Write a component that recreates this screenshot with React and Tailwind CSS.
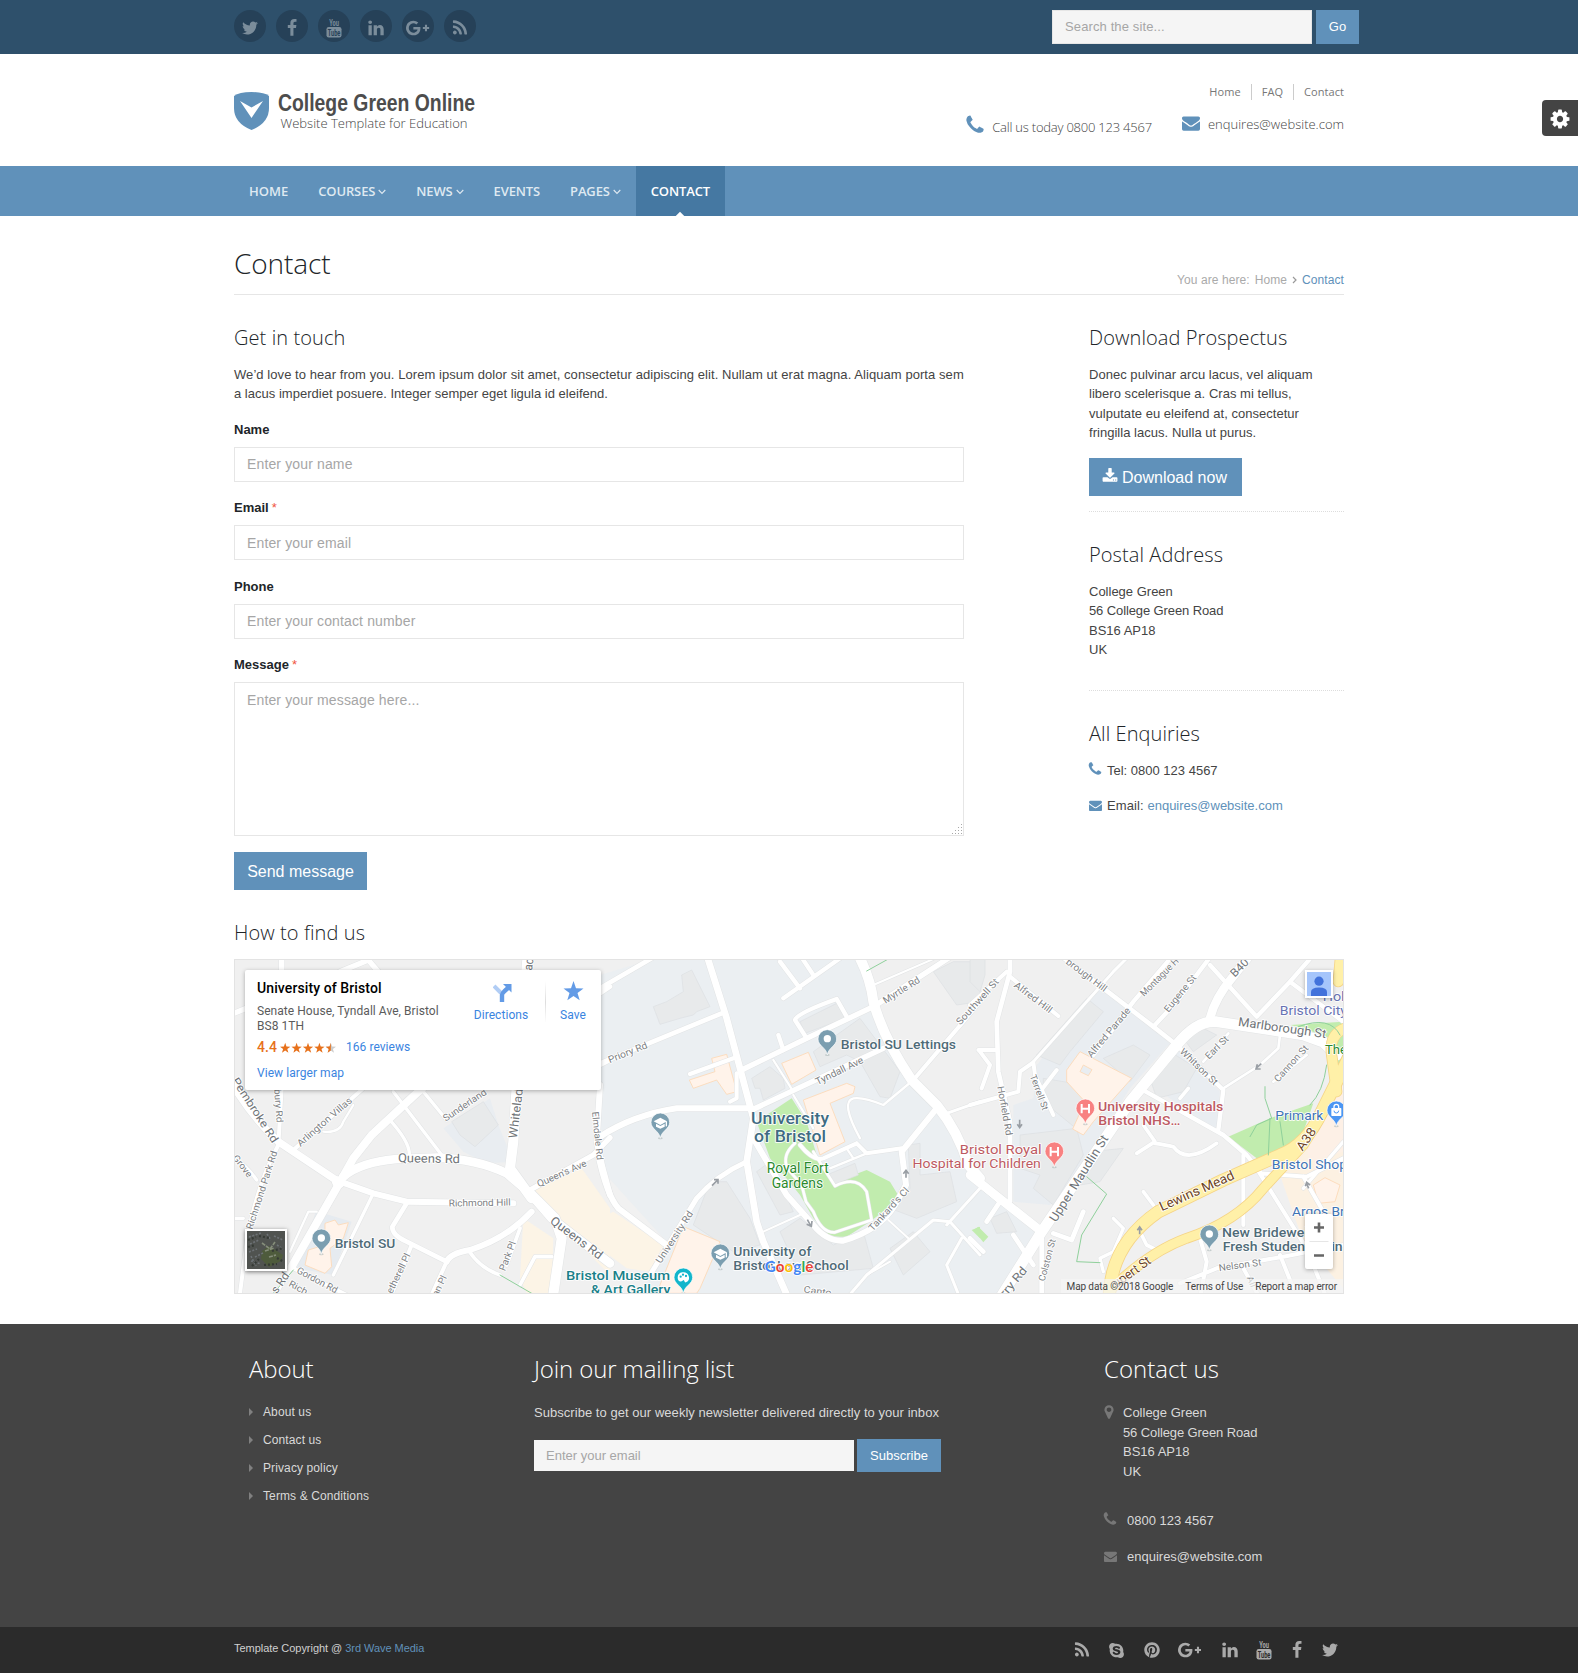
import React from "react";
import { FaSkype, FaPinterest } from "react-icons/fa";

const PATHS = {
  twitter: "M1684 408q-67 98-162 167 1 14 1 42 0 130-38 259.5t-115.5 248.5-184.5 210.5-258 146-323 54.5q-271 0-496-145 35 4 78 4 225 0 401-138-105-2-188-64.5t-114-159.5q33 5 61 5 43 0 85-11-112-23-185.5-111.5t-73.5-205.5v-4q68 38 146 41-66-44-105-115t-39-154q0-88 44-163 121 149 294.5 238.5t371.5 99.5q-8-38-8-74 0-134 94.5-228.5t228.5-94.5q140 0 236 102 109-21 205-78-37 115-142 178 93-10 186-50z",
  facebook: "M1343 12v264h-157q-86 0-116 36t-30 108v189h293l-39 296h-254v759h-306v-759h-255v-296h255v-218q0-186 104-288.5t277-102.5q147 0 228 12z",
  linkedin: "M477 625v991h-330v-991h330zm21-306q1 73-50.5 122t-135.5 49h-2q-82 0-132-49t-50-122q0-74 51.5-122.5t134.5-48.5 133 48.5 51 122.5zm1166 729v568h-329v-530q0-105-40.5-164.5t-126.5-59.5q-63 0-105.5 34.5t-63.5 85.5q-11 30-11 81v553h-329q2-399 2-647t-1-296l-1-48h329v144h-2q20-32 41-56t56.5-52 87-43.5 114.5-15.5q171 0 275 113.5t104 332.5z",
  rss: "M576 1344q0 80-56 136t-136 56-136-56-56-136 56-136 136-56 136 56 56 136zm512 123q2 28-17 48-18 21-47 21h-135q-25 0-43-16.5t-20-41.5q-22-229-184.5-391.5t-391.5-184.5q-25-2-41.5-20t-16.5-43v-135q0-29 21-47 17-17 43-17h5q160 13 306 80.5t259 181.5q114 113 181.5 259t80.5 306zm512 2q2 27-18 47-18 20-46 20h-143q-26 0-44.5-17.5t-19.5-42.5q-12-215-101-408.5t-231.5-336-336-231.5-408.5-102q-25-1-42.5-19.5t-17.5-43.5v-143q0-28 20-46 18-18 44-18h3q262 13 501.5 120t425.5 294q187 186 294 425.5t120 501.5z",
  gplus: "M1437 913q0 208-87 370.5t-248 254-369 91.5q-149 0-285-58t-234-156-156-234-58-285 58-285 156-234 234-156 285-58q286 0 491 192l-199 191q-117-113-292-113-123 0-227.5 62t-165.5 168.5-61 232.5 61 232.5 165.5 168.5 227.5 62q83 0 152.5-23t114.5-57.5 78.5-78.5 49-83 21.5-74h-416v-252h692q12 63 12 122zm867-122v210h-209v209h-210v-209h-209v-210h209v-209h210v209h209z",
  phone: "M1600 1240q0 27-10 70.5t-21 68.5q-21 50-122 106-94 51-186 51-27 0-53-3.5t-57.5-12.5-47-14.5-55.5-20.5-49-18q-98-35-175-83-127-79-264-216t-216-264q-48-77-83-175-3-9-18-49t-20.5-55.5-14.5-47-12.5-57.5-3.5-53q0-92 51-186 56-101 106-122 25-11 68.5-21t70.5-10q14 0 21 3 18 6 53 76 11 19 30 54t35 63.5 31 53.5q3 4 17.5 25t21.5 35.5 7 28.5q0 20-28.5 50t-62 55-62 53-28.5 46q0 9 5 22.5t8.5 20.5 14 24 11.5 19q76 137 174 235t235 174q2 1 19 11.5t24 14 20.5 8.5 22.5 5q18 0 46-28.5t53-62 55-62 50-28.5q14 0 28.5 7t35.5 21.5 25 17.5q25 15 53.5 31t63.5 35 54 30q70 35 76 53 3 7 3 21z",
  envelope: "M1792 710v794q0 66-47 113t-113 47h-1472q-66 0-113-47t-47-113v-794q44 49 101 87 362 246 497 345 57 42 92.5 65.5t94.5 48 110 24.5h2q51 0 110-24.5t94.5-48 92.5-65.5q170-123 498-345 57-39 100-87zm0-294q0 79-49 151t-122 123q-376 261-468 325-10 7-42.5 31t-54 38.5-52 32.5-57.5 27-50 9h-2q-23 0-50-9t-57.5-27-52-32.5-54-38.5-42.5-31q-91-64-262-182.5t-205-142.5q-62-42-117-115.5t-55-136.5q0-78 41.5-130t118.5-52h1472q65 0 112.5 47t47.5 113z",
  cog: "M1152 896q0-106-75-181t-181-75-181 75-75 181 75 181 181 75 181-75 75-181zm512-109v222q0 12-8 23t-20 13l-185 28q-19 54-39 91 35 50 107 138 10 12 10 25t-9 23q-27 37-99 108t-94 71q-12 0-26-9l-138-108q-44 23-91 38-16 136-29 186-7 28-36 28h-222q-14 0-24.5-8.5t-11.5-21.5l-28-184q-49-16-90-37l-141 107q-10 9-25 9-14 0-25-11-126-114-165-168-7-10-7-23 0-12 8-23 15-21 51-66.5t54-70.5q-27-50-41-99l-183-27q-13-2-21-12.5t-8-23.5v-222q0-12 8-23t19-13l186-28q14-46 39-92-40-57-107-138-10-12-10-24 0-10 9-23 26-36 98.5-107.5t94.5-71.5q13 0 26 10l138 107q44-23 91-38 16-136 29-186 7-28 36-28h222q14 0 24.5 8.5t11.5 21.5l28 184q49 16 90 37l142-107q9-9 24-9 13 0 25 10 129 119 165 170 7 8 7 22 0 12-8 23-15 21-51 66.5t-54 70.5q26 50 41 98l183 28q13 2 21 12.5t8 23.5z",
  marker: "M1152 640q0-106-75-181t-181-75-181 75-75 181 75 181 181 75 181-75 75-181zm256 0q0 109-33 179l-364 774q-16 33-47.5 52t-67.5 19-67.5-19-46.5-52l-365-774q-33-70-33-179 0-212 150-362t362-150 362 150 150 362z",
  download: "M1344 1344q0-26-19-45t-45-19-45 19-19 45 19 45 45 19 45-19 19-45zm256 0q0-26-19-45t-45-19-45 19-19 45 19 45 45 19 45-19 19-45zm128-224v320q0 40-28 68t-68 28h-1472q-40 0-68-28t-28-68v-320q0-40 28-68t68-28h465l135 136q58 56 136 56t136-56l136-136h464q40 0 68 28t28 68zm-325-569q17 41-14 70l-448 448q-18 19-45 19t-45-19l-448-448q-31-29-14-70 17-39 59-39h256v-448q0-26 19-45t45-19h256q26 0 45 19t19 45v448h256q42 0 59 39z",
};

function Icon({ name, size = 18, className = "" }) {
  const wide = name === "gplus";
  return (
    <svg width={wide ? (size * 2304) / 1792 : size} height={size} viewBox={wide ? "0 0 2304 1792" : "0 0 1792 1792"} fill="currentColor" className={"shrink-0 " + className}>
      <path d={PATHS[name]} />
    </svg>
  );
}

function YouTubeIcon({ knock }) {
  return (
    <svg width="18" height="20" viewBox="0 0 18 20" className="shrink-0 overflow-visible">
      <text x="4.2" y="8.2" fontFamily="Roboto" fontWeight="700" fontSize="9.5" fill="currentColor" textLength="9.8" lengthAdjust="spacingAndGlyphs">You</text>
      <rect x="1.5" y="9" width="15" height="10.5" rx="2.2" fill="currentColor" />
      <text x="2.8" y="17.7" fontFamily="Roboto" fontWeight="700" fontSize="9" fill={knock} textLength="12.6" lengthAdjust="spacingAndGlyphs">Tube</text>
    </svg>
  );
}

function Caret() {
  return (
    <svg width="8" height="6" viewBox="0 0 8 6" className="mt-px ml-[3px]" fill="none" stroke="currentColor" strokeWidth="1.1">
      <path d="M0.7 1 4 4.4 7.3 1" />
    </svg>
  );
}

const NAV = [
  ["HOME", false],
  ["COURSES", true],
  ["NEWS", true],
  ["EVENTS", false],
  ["PAGES", true],
];

/* ---- Map artwork: one drawing unit is a third of a pixel, in three side-by-side sheets ---- */
const SHEET_X = [0, 1110, 2220];

const AREAS = [
  [1, "M0 60 160 12H775L820 140 870 260 1000 440 1060 520 1110 640V1015H600L0 1015V600L0 60Z", "#ebeff2"],
  [1, "M0 640 200 860 150 960 140 1015H0Z", "#f1f1f1"],
  [0, "M1110 120 1140 100V560L1110 570Z", "#ebeff2"],
  [0, "M640 520 780 430 805 510 850 620 770 625 700 590Z", "#e9edf1"],
  [0, "M258 768 365 800 310 960 200 940Z", "#e6ebf0"],
  [0, "M915 705 1055 640 1140 760V960L1040 860 960 790ZM880 790 970 850 965 1015H890L870 970Z", "#fcf4e6"],
  [1, "M0 880V790L40 770 190 870 150 950 80 940Z", "#fcf4e6"],
  [2, "M0 650 220 830 90 1015H0Z", "#ebeff2"],
  [2, "M200 330 400 90 520 200 600 265 480 400 300 690 240 750 130 740 130 450 190 430Z", "#e9edf1"],
  [2, "M530 380 620 280 750 410 740 530Z", "#e9edf1"],
  [2, "M930 660 1000 560 1120 590V1000L1000 860Z", "#fcf1e2"],
  [2, "M1000 540 1120 380V590L1020 620Z", "#fdf0e6"],
  [1, "M470 500 575 430 620 500 650 600 705 690 760 660 800 645 870 680 900 730 810 800 740 845 690 845 640 790 600 720 510 610Z", "#c1ecae"],
  [2, "M775 545 900 490 1030 445 1000 530 950 590 860 610Z", "#c1ecae"],
  [2, "M960 210 1120 200V235L1080 250 1000 220ZM1100 240 1120 240V380L1090 330Z", "#c1ecae"],
  [2, "M10 825 25 815 55 845 40 862Z", "#c1ecae"],
  [1, "M1115 825 1140 815V850Z", "#c1ecae"],
];

const BUILDINGS = [
  [0, "M665 500 760 440 805 510 735 575 690 540Z"],
  [1, "M160 155 200 140 250 110 245 60 275 45 330 155 290 170 280 180 240 190 180 208Z"],
  [1, "M455 370 510 335 550 370 555 400 490 435 480 400 465 400Z"],
  [1, "M600 200 710 145 735 190 615 235ZM640 290 780 190 900 350 870 430 840 425 780 320 740 300 660 335Z"],
  [1, "M470 650 510 620 580 770 540 780ZM540 830 600 790 700 870 790 830 820 940 600 960Z"],
  [1, "M330 680 380 680 450 790 480 870 400 890 280 810Z"],
  [1, "M680 660 765 625 775 660 700 690Z"],
  [1, "M925 570 960 565V660L1050 650 1070 740 950 790 870 760 930 700ZM870 880 940 830 990 890 910 960Z"],
  [1, "M1000 50 1060 20H1140V140L1070 150Z"],
  [2, "M0 12H45V60L30 110 0 80Z"],
  [2, "M200 300 350 130 400 170 300 290 270 330ZM220 370 400 400 330 530 220 440Z"],
  [2, "M150 540 320 520 340 600 250 750 190 700 210 660 150 640ZM360 590 460 580 390 680 330 690Z"],
  [2, "M400 310 490 270 540 300 480 380ZM540 370 600 290 680 340 640 410 560 430ZM640 250 690 215 740 240 670 290Z"],
  [2, "M60 790 110 770 140 830 80 835Z"],
];

const HIGHLIGHTS = [
  [0, "M285 805 315 795 325 810 355 803 340 850 300 880 305 935 285 955 225 930 235 885 285 870Z"],
  [1, "M335 310 380 298 410 410 380 418 350 375 280 400 268 375 345 350Z"],
  [1, "M545 325 625 292 648 345 575 388Z"],
  [1, "M610 435 740 385 765 395 760 415 690 445 735 560 660 600Z"],
  [1, "M250 815 360 860 300 1000 290 1015H170Z"],
  [2, "M290 345 330 290 485 370 370 500 340 540 308 522 345 440 290 380ZM340 330 330 350 355 362 366 344Z"],
  [2, "M1030 690 1065 668 1110 690 1095 740 1045 745Z"],
];

const ROADS = [
  // west
  [0, 22, "M0 375Q60 480 145 560L325 680"],
  [0, 24, "M185 935 325 690 370 610 425 540 565 410 600 380"],
  [0, 26, "M340 665Q390 622 500 612L620 608Q740 612 830 655L900 715 965 790 1140 925"],
  [0, 30, "M893 0 860 390 850 560 840 640 905 730"],
  [0, 30, "M905 720 975 790 995 850 968 1030"],
  [0, 34, "M323 681 327 683"],
  [0, 16, "M900 705 1090 600 1140 548"],
  [0, 18, "M1110 390 1100 560 1118 640 1140 720"],
  [0, 18, "M330 680 430 715 530 740 850 745"],
  [0, 10, "M430 715 310 960"],
  [0, 14, "M530 745 487 815Q485 840 530 860L650 920"],
  [0, 12, "M545 870 480 1030M650 920 600 1030"],
  [0, 18, "M650 920Q660 895 720 885 830 850 905 770"],
  [0, 11, "M715 885Q750 940 810 960M870 820 830 930M965 905 915 905 870 990"],
  [0, 12, "M190 585 400 400"],
  [0, 12, "M145 570 155 400M145 570Q80 690 50 860L28 1030"],
  [0, 10, "M0 600Q50 630 80 675M0 790H40M475 490Q540 560 538 600M490 410 635 600M580 410 650 495"],
  [0, 7, "M280 530Q330 535 340 500L370 450M260 770H235L180 890"],
  [0, 12, "M190 940 370 1030M185 935 130 1030"],
  [0, 16, "M155 0V50M0 180 60 155M330 50 415 15 445 50"],
  [0, 14, "M1110 115 1140 95M1110 330 1140 315"],
  // centre
  [1, 14, "M0 100 180 -5M0 325 365 175"],
  [1, 20, "M320 0 380 190 460 490 440 620 470 800 490 860 565 1030"],
  [1, 16, "M425 345 620 250 820 155 1060 0M455 465 850 280"],
  [1, 30, "M775 0Q812 70 820 140 850 250 935 375L1010 450Q1075 530 1105 630L1140 670"],
  [1, 18, "M0 545Q100 480 230 460L455 460"],
  [1, 15, "M440 620Q350 660 290 730L150 960"],
  [1, 18, "M-5 600Q20 720 55 760L200 870"],
  [1, 18, "M460 550 560 720 640 810Q680 860 730 857 840 825 885 750L918 690 905 590 1010 460"],
  [1, 12, "M600 570Q640 620 670 610L770 565M770 565 800 595 905 580"],
  [1, 8, "M585 565Q545 600 562 640L605 690 618 740 640 770Q665 835 705 832L815 795 800 710Q770 660 705 693L640 590"],
  [1, 13, "M620 250 585 195Q590 175 710 132L740 185M550 285 535 240M270 357 400 310M550 130 720 10M540 20 600 100M600 0 640 60"],
  [1, 7, "M780 550Q720 440 760 430 790 425 850 450L940 375M520 315 580 410M580 420 640 520M690 640 800 595M740 580 760 610"],
  [1, 12, "M940 375 1090 200 1140 140M410 355 410 430 390 440"],
  [1, 6, "M820 90 1000 12M490 830 600 780M865 795 925 850M800 960 870 920"],
  [1, 9, "M740 1030 800 960 1000 795 1050 800 1140 900M1085 850 1040 930 1080 1030M1040 475 1140 440M1040 810 1140 700"],
  // east
  [2, 32, "M90 1030 215 830 480 440 620 270Q680 195 740 200L1000 240 1060 262 1100 300"],
  [2, 26, "M720 190Q735 130 785 70L840 0"],
  [2, 26, "M0 660 215 830"],
  [2, 14, "M120 0V50L80 200 85 350 120 500V740"],
  [2, 12, "M0 150 110 50M120 65 265 183M25 285H80M30 290 60 330 35 400M0 450 145 410 150 350 190 322 195 360 250 480M210 410 260 345"],
  [2, 9, "M190 320 430 50 480 0"],
  [2, 14, "M270 0 550 215 620 270"],
  [2, 13, "M550 215 620 140 725 0M490 140 610 0M370 300 490 140M720 30 860 185 960 80 1030 0M960 80 1120 200"],
  [2, 13, "M620 270 760 405 745 525M510 400 760 540 830 600 870 650"],
  [2, 8, "M760 400 870 330 925 280 930 240M700 320 775 235M910 380 1010 300"],
  [2, 11, "M500 595 555 560 520 510M555 565Q590 570 610 575 650 630 740 565M655 400 630 430M520 710 550 750M510 830 530 870 570 890"],
  [2, 12, "M860 640 1010 880 1070 1030M820 600V810M870 655 1010 665 1120 610M1000 665 1060 770"],
  [2, 12, "M630 985 740 940 940 905 1120 870M690 850 710 920 690 1030M820 940 870 1030M930 900 970 1000"],
  [2, 14, "M215 830V1030M250 835 305 855 340 770M0 850 40 890M30 690 90 740 50 800M130 840 190 930"],
  [2, 10, "M430 790 460 820 430 890 390 910 400 950M1000 700 1120 560"],
];

const YELLOW = [
  [2, 36, "M418 1030Q420 870 565 770L760 675 930 600Q1010 570 1055 470L1135 310"],
  [2, 28, "M425 1000Q540 890 650 850 800 800 880 700L1000 570 1060 470"],
  [2, 30, "M1140 215Q1075 230 1085 300L1100 410M1112 0 1105 80"],
];

const GREENS = [
  [2, "M350 665 410 717 335 840 320 920 390 923"],
  [2, "M885 395V430L905 490 860 510 840 545M900 490 895 600M930 500 940 570M1070 330Q1060 410 1020 450"],
  [2, "M985 215Q1080 180 1110 240"],
  [1, "M800 48 865 12"],
  [0, "M810 960 905 1015M130 1015 190 945"],
];

const GREY = "#6f7478";
const SOFT = "#7d8184";
// sheet, centre x, centre y, rotation, text, size, colour, width, weight
const LABELS = [
  [0, 76, 465, 57, "Pembroke Rd", 34, GREY, 225, 400],
  [0, 146, 452, 86, "bury Rd", 28, SOFT, 100, 400],
  [0, 283, 500, -41, "Arlington Villas", 29, SOFT, 208, 400],
  [0, 704, 450, -34, "Sunderland", 29, SOFT, 150, 400],
  [0, 857, 475, -83, "Whitelad", 36, GREY, 150, 400],
  [0, 896, 28, -83, "ac", 36, GREY, 36, 400],
  [0, 597, 610, 1, "Queens Rd", 37, GREY, 186, 400],
  [0, 1040, 848, 37, "Queens Rd", 37, GREY, 186, 400],
  [0, 1103, 542, 84, "Elmdale Rd", 28, SOFT, 145, 400],
  [0, 995, 655, -24, "Queen's Ave", 29, SOFT, 160, 400],
  [0, 749, 743, -1, "Richmond Hill", 29, SOFT, 186, 400],
  [0, 95, 705, -72, "Richmond Park Rd", 29, SOFT, 245, 400],
  [0, 38, 633, 52, "Grove", 28, SOFT, 76, 400],
  [0, 262, 975, 28, "Gordon Rd", 29, SOFT, 135, 400],
  [0, 205, 998, 28, "Rich", 28, SOFT, 60, 400],
  [0, 150, 983, -55, "s Rd", 35, GREY, 68, 400],
  [0, 505, 955, -64, "etherell Pl", 29, SOFT, 130, 400],
  [0, 628, 992, -64, "an Pl", 28, SOFT, 66, 400],
  [0, 832, 903, -69, "Park Pl", 29, SOFT, 92, 400],
  [1, 83, 292, -22, "Priory Rd", 29, SOFT, 124, 400],
  [1, 904, 105, -32, "Myrtle Rd", 29, SOFT, 125, 400],
  [1, 718, 347, -26, "Tyndall Ave", 30, SOFT, 156, 400],
  [1, 223, 846, -57, "University Rd", 29, SOFT, 180, 400],
  [1, 866, 762, -48, "Tankard's Cl", 29, SOFT, 165, 400],
  [1, 653, 1008, 8, "Canto", 28, SOFT, 84, 400],
  [2, 22, 140, -48, "Southwell St", 29, SOFT, 175, 400],
  [2, 190, 127, 37, "Alfred Hill", 29, SOFT, 135, 400],
  [2, 350, 60, 37, "brough Hill", 29, SOFT, 145, 400],
  [2, 416, 232, -50, "Alfred Parade", 29, SOFT, 185, 400],
  [2, 568, 66, -45, "Montague H", 29, SOFT, 150, 400],
  [2, 630, 115, -51, "Eugene St", 29, SOFT, 135, 400],
  [2, 808, 38, -45, "B40", 34, GREY, 62, 400],
  [2, 937, 218, 8, "Marlborough St", 37, GREY, 266, 400],
  [2, 740, 277, -45, "Earl St", 29, SOFT, 86, 400],
  [2, 687, 335, 44, "Whitson St", 29, SOFT, 145, 400],
  [2, 963, 325, -48, "Cannon St", 29, SOFT, 138, 400],
  [2, 208, 412, 70, "Terrell St", 28, SOFT, 112, 400],
  [2, 105, 467, 80, "Horfield Rd", 29, SOFT, 150, 400],
  [2, 326, 670, -58, "Upper Maudlin St", 37, GREY, 298, 400],
  [2, 231, 915, -75, "Colston St", 28, SOFT, 130, 400],
  [2, 130, 980, -50, "rry Rd", 35, GREY, 105, 400],
  [2, 810, 930, -8, "Nelson St", 29, SOFT, 128, 400],
  [2, 845, 980, 68, "All", 27, SOFT, 34, 400],
  [2, 680, 707, -24, "Lewins Mead", 40, "#6d4423", 242, 400],
  [2, 1008, 552, -55, "A38", 38, "#6d4423", 74, 400],
  [2, 485, 950, -36, "upert St", 39, "#6d4423", 130, 400],
  [0, 405, 865, 0, "Bristol SU", 40, "#4f6b78", 182, 500],
  [1, 895, 268, 0, "Bristol SU Lettings", 40, "#4f6b78", 346, 500],
  [1, 570, 490, 0, "University", 52, "#3f6b82", 234, 500],
  [1, 570, 544, 0, "of Bristol", 52, "#3f6b82", 216, 500],
  [1, 593, 640, 0, "Royal Fort", 42, "#2a8a2e", 186, 400],
  [1, 592, 683, 0, "Gardens", 42, "#2a8a2e", 154, 400],
  [1, 517, 889, 0, "University of", 40, "#4f6b78", 234, 500],
  [1, 573, 932, 0, "Bristol Law School", 40, "#4f6b78", 346, 500],
  [1, 54, 961, 0, "Bristol Museum", 40, "#1a8089", 312, 500],
  [1, 92, 1002, 0, "& Art Gallery", 40, "#1a8089", 238, 500],
  [2, 92, 583, 0, "Bristol Royal", 41, "#bd5a62", 246, 400],
  [2, 20, 626, 0, "Hospital for Children", 41, "#bd5a62", 385, 400],
  [2, 572, 455, 0, "University Hospitals", 41, "#bd5a62", 376, 500],
  [2, 508, 497, 0, "Bristol NHS…", 41, "#bd5a62", 246, 500],
  [2, 988, 481, 0, "Primark", 40, "#3f74b5", 144, 400],
  [2, 1030, 628, 0, "Bristol Shopp", 40, "#3f74b5", 250, 400],
  [2, 1050, 768, 0, "Argos Bri", 40, "#3f74b5", 168, 400],
  [2, 1096, 125, 0, "Holi", 41, "#6773b3", 76, 400],
  [2, 1030, 166, 0, "Bristol City", 41, "#6773b3", 202, 400],
  [2, 1098, 284, 0, "The", 40, "#2a8a2e", 66, 400],
  [2, 890, 832, 0, "New Bridewell", 40, "#4f6b78", 268, 500],
  [2, 938, 875, 0, "Fresh Student Livin", 40, "#4f6b78", 360, 500],
];

const PINS = [
  [0, 274, 898, "#7b9eb0", "dot"],
  [1, 682, 300, "#7b9eb0", "dot"],
  [1, 181, 550, "#7b9eb0", "cap"],
  [1, 361, 943, "#7b9eb0", "cap"],
  [1, 250, 1015, "#12b5cb", "art"],
  [2, 346, 508, "#f88181", "H"],
  [2, 253, 637, "#f88181", "H"],
  [2, 1099, 514, "#4b96f3", "bag"],
  [2, 718, 886, "#7b9eb0", "dot"],
];

function Pin({ x, y, color, kind }) {
  return (
    <g transform={`translate(${x} ${y - 47})`}>
      <ellipse cx="0" cy="47" rx="7" ry="3" fill="#9aa" opacity=".5" />
      <path d="M0 47C-3 24-28 20-28-1A28 28 0 1 1 28-1C28 20 3 24 0 47Z" fill={color} stroke="#fff" strokeWidth="2" />
      {kind === "dot" && <circle r="11" cy="-2" fill="#fff" />}
      {kind === "H" && <path d="M-11-14V14M11-14V14M-11 0H11" stroke="#fff" strokeWidth="6" />}
      {kind === "cap" && <g><path d="M-20-4 0-15 20-4 0 7Z" fill="#fff" /><path d="M-13 3V12L0 18 13 12V3L0 10Z" fill="#fff" /><path d="M18-4V11" stroke="#fff" strokeWidth="4" /></g>}
      {kind === "bag" && (
        <g>
          <rect x="-15" y="-8" width="30" height="24" rx="2" fill="#fff" />
          <path d="M-7-6V-12A7 7 0 0 1 7-12V-6" fill="none" stroke="#fff" strokeWidth="4" />
          <path d="M-7 0A7 7 0 0 0 7 0" fill="none" stroke={color} strokeWidth="3" />
        </g>
      )}
      {kind === "art" && (
        <g>
          <path d="M-17 0A17 16 0 1 1 8 14C2 16 5 8 0 7-8 16-17 10-17 0Z" fill="#fff" />
          <circle cx="-8" cy="-3" r="3.4" fill={color} /><circle cx="-1" cy="-9" r="3.4" fill={color} /><circle cx="8" cy="-5" r="3.4" fill={color} />
        </g>
      )}
    </g>
  );
}

function MapArt() {
  const shift = (s) => `translate(${SHEET_X[s]} 0)`;
  return (
    <svg width="1108" height="333" viewBox="15 15 3324 999" className="block" fontFamily="Roboto, sans-serif">
      <rect x="0" y="0" width="3400" height="1100" fill="#f0f0f0" />
      {AREAS.map(([s, d, c], i) => <path key={i} d={d} fill={c} transform={shift(s)} />)}
      {BUILDINGS.map(([s, d], i) => <path key={i} d={d} fill="#e8eaeb" stroke="#dde0e2" strokeWidth="2" transform={shift(s)} />)}
      {HIGHLIGHTS.map(([s, d], i) => <path key={i} d={d} fill="#fff3ea" fillRule="evenodd" stroke="#fcd9b6" strokeWidth="2.5" transform={shift(s)} />)}
      <g fill="none" strokeLinecap="round" strokeLinejoin="round">
        {ROADS.map(([s, w, d], i) => <path key={i} d={d} stroke="#e2e4e5" strokeWidth={w + 3} transform={shift(s)} />)}
        {ROADS.map(([s, w, d], i) => <path key={i} d={d} stroke="#fff" strokeWidth={w} transform={shift(s)} />)}
        {YELLOW.map(([s, w, d], i) => <path key={i} d={d} stroke="#f5d487" strokeWidth={w + 4} transform={shift(s)} />)}
        {YELLOW.map(([s, w, d], i) => <path key={i} d={d} stroke="#fff0a8" strokeWidth={w - 1} transform={shift(s)} />)}
        {GREENS.map(([s, d], i) => <path key={i} d={d} stroke="#8fd09b" strokeWidth="3" transform={shift(s)} />)}
      </g>
      <g stroke="#999ea4" strokeWidth="5" fill="none">
        <path d="M1446 692 1462 676M1452 674H1464V686M1732 794 1742 812M1746 798 1744 814 1730 808M2028 668V648M2020 656 2028 646 2036 656" />
        <path d="M2369 494V516M2362 508 2369 518 2376 508M3094 326 3078 340M3082 328 3078 342 3092 342M2729 838V818M2722 826 2729 816 2736 826M3236 700 3230 686M3226 694 3230 682 3240 690" />
      </g>
      {LABELS.map(([s, x, y, r, t, size, color, len, w], i) => (
        <text key={i} transform={`translate(${SHEET_X[s] + x} ${y}) rotate(${r})`} x={-len / 2} y={size * 0.35} fontSize={size} fontWeight={w} fill={color} stroke="#fff" strokeWidth="5" strokeLinejoin="round" paintOrder="stroke" textLength={len} lengthAdjust="spacingAndGlyphs">
          {t}
        </text>
      ))}
      {PINS.map(([s, x, y, c, k], i) => <Pin key={i} x={SHEET_X[s] + x} y={y} color={c} kind={k} />)}
      <text x="1604" y="952" fontSize="46" fontFamily="Lato, sans-serif" fontWeight="700" stroke="#fff" strokeWidth="5" paintOrder="stroke" textLength="146" lengthAdjust="spacingAndGlyphs">
        <tspan fill="#4285f4">G</tspan><tspan fill="#ea4335">o</tspan><tspan fill="#fbbc05">o</tspan><tspan fill="#4285f4">g</tspan><tspan fill="#34a853">l</tspan><tspan fill="#ea4335">e</tspan>
      </text>
    </svg>
  );
}

const STAR = "M10 0 12.5 7.2 20 7.5 14 12 16.2 19.3 10 15 3.8 19.3 6 12 0 7.5 7.5 7.2Z";

function PlaceCard() {
  return (
    <div className="absolute left-[10px] top-[10px] flex h-[120px] w-[356px] rounded-[2px] bg-white font-[Roboto] text-[12px] tracking-[0.05px] shadow-[0_1px_4px_rgba(0,0,0,0.3)]">
      <div className="w-[212px] pl-3 pt-[9px]">
        <div className="text-[14px] font-medium leading-[18px] tracking-[0.1px] text-black">University of Bristol</div>
        <div className="mt-[7px] whitespace-nowrap leading-[15px] text-[#5b5b5b]">Senate House, Tyndall Ave, Bristol<br />BS8 1TH</div>
        <div className="mt-[5px] flex h-[18px] items-center whitespace-nowrap">
          <span className="text-[14px] font-medium text-[#e7711b]">4.4</span>
          <svg width="56" height="12" viewBox="0 0 108 20" className="ml-[3px]">
            {[0, 1, 2, 3].map((i) => <path key={i} d={STAR} transform={`translate(${i * 22} 0)`} fill="#e7711b" />)}
            <path d={STAR} transform="translate(88 0)" fill="#ccc" />
            <path d="M98 0V15L91.8 19.3 94 12 88 7.5 95.5 7.2Z" fill="#e7711b" />
          </svg>
          <span className="ml-[10px] text-[#3a84df]">166 reviews</span>
        </div>
        <div className="mt-[8px] leading-4 text-[#3a84df]">View larger map</div>
      </div>
      <div className="flex w-[88px] flex-col items-center pt-[14px] text-[#3a84df]">
        <svg width="20" height="18" viewBox="0 0 20 18" className="ml-[3px]">
          <path d="M1 2 8 9" stroke="#b1cdf5" strokeWidth="4" />
          <path d="M9 18V11Q9 9 15 4" fill="none" stroke="#639be6" strokeWidth="4.4" />
          <path d="M10 0H18.5V8.5Z" fill="#639be6" />
        </svg>
        <span className="mt-[5px] leading-[17px]">Directions</span>
      </div>
      <div className="mt-[11px] h-[42px] w-px bg-gradient-to-b from-transparent via-[#ddd] to-transparent" />
      <div className="flex w-[54px] flex-col items-center pt-[11px] text-[#3a84df]">
        <svg width="21" height="20" viewBox="0 0 20 20"><path d={STAR} fill="#639be6" /></svg>
        <span className="mt-[6px] leading-[17px]">Save</span>
      </div>
    </div>
  );
}

function SatelliteThumb() {
  return (
    <div className="absolute left-[10px] top-[269px] size-[42px] border-2 border-white shadow-[0_1px_4px_rgba(0,0,0,0.5)]">
      <svg width="38" height="38" viewBox="0 0 38 38" className="block">
        <rect width="38" height="38" fill="#505350" />
        <path d="M15 20 22 15 36 24 34 30 22 36 14 28Z" fill="#4e5b3c" />
        <path d="M2 6 14 2M3 13 12 9M2 21 10 18M4 30 14 33M27 5 36 9M30 14 36 18M8 26 16 22M4 25 9 35M20 3 24 9" stroke="#6d7276" strokeWidth="1.6" strokeDasharray="2 1.500" />
        <path d="M15 12 23 18 28 11M18 20 27 17M22 26 29 24" stroke="#858d7a" strokeWidth="1.6" strokeDasharray="4 1" fill="none" />
        <path d="M1 16 8 14M12 5 22 7M5 35 12 28M30 27 37 31M25 20 36 17M17 34 30 33M1 9 9 6" stroke="#353a35" strokeWidth="2.2" strokeDasharray="2 2" />
      </svg>
    </div>
  );
}

function MapBox() {
  return (
    <div className="relative h-[335px] overflow-hidden border border-[#e3e3e3]">
      <MapArt />
      <PlaceCard />
      <SatelliteThumb />
      <div className="absolute right-[10px] top-[10px] size-[28px] border-2 border-white bg-[#a5c5fb] shadow-[0_1px_4px_rgba(0,0,0,0.3)]">
        <svg width="24" height="24" viewBox="0 0 24 24" fill="#4272db"><circle cx="12" cy="9.2" r="4.6" /><path d="M4 24V20Q4 15.5 12 15.5T20 20V24Z" /></svg>
      </div>
      <div className="absolute right-[10px] top-[254px] h-[55px] w-7 rounded-[2px] bg-white shadow-[0_1px_4px_rgba(0,0,0,0.3)]">
        <svg width="28" height="55" viewBox="0 0 28 55" stroke="#666" strokeWidth="2.6"><path d="M9 13.5H19M14 8.5V18.5M9 41.5H19" /><path d="M4.500 27.500H23.500" stroke="#e6e6e6" strokeWidth="1" /></svg>
      </div>
      <div className="absolute bottom-0 right-0 flex h-[14px] items-center gap-3 whitespace-nowrap bg-[#f5f5f5]/70 px-[6px] pt-px font-[Roboto] text-[10px] tracking-[-0.1px] text-[#444]">
        <span>Map data ©2018 Google</span><span>Terms of Use</span><span>Report a map error</span>
      </div>
    </div>
  );
}

const H3 = "pt-px font-['Open_Sans'] text-[20px] font-light leading-6 tracking-[0.08px] text-[#212529]";
const INPUT = "block w-full border border-[#e6e6e6] bg-white px-3 text-[14px] tracking-[0.14px] text-[#444] placeholder-[#a6a6a6] outline-none";
const FOOT_H3 = "font-['Open_Sans'] text-[24px] font-light leading-8 tracking-[-0.12px] text-white";

function Field({ label, required, children }) {
  return (
    <div className="mb-[16.5px]">
      <label className="mb-[7.5px] block text-[13px] font-bold leading-[19.5px] text-[#212529]">
        {label}
        {required && <span className="ml-[3px] font-normal text-[#f05542]">*</span>}
      </label>
      {children}
    </div>
  );
}

function Address() {
  return (
    <p className="whitespace-nowrap">
      College Green<br />
      <span className="tracking-[-0.11px]">56 College Green Road</span><br />
      BS16 AP18<br />
      UK
    </p>
  );
}

export default function App() {
  return (
    <div className="min-h-[1673px] w-[1578px] bg-white font-['Liberation_Sans',sans-serif] text-[13px] leading-[19.5px] text-[#444]">
      <div className="h-[54px] bg-[#2e506b]">
        <div className="mx-auto flex w-[1110px] justify-between pt-[10px]">
          <div className="flex gap-[10px] text-[#7b8d9b]">
            {["twitter", "facebook", "youtube", "linkedin", "gplus", "rss"].map((n) => (
              <a key={n} className="flex size-8 items-center justify-center rounded-full bg-[#264158] pt-[3px]">
                {n === "youtube" ? <YouTubeIcon knock="#264158" /> : <Icon name={n} size={18} />}
              </a>
            ))}
          </div>
          <div className="-mr-[15px] flex gap-1">
            <input className="h-[34px] w-[260px] border border-[#e6e6e6] bg-[#f5f5f5] px-3 pb-[2px] text-[13px] tracking-[0.12px] placeholder-[#a6a6a6] outline-none" placeholder="Search the site..." />
            <button className="h-[34px] w-[43px] bg-[#6091ba] text-[13px] text-white">Go</button>
          </div>
        </div>
      </div>

      <header className="mx-auto flex h-[112px] w-[1110px] justify-between">
        <svg width="242" height="42" viewBox="0 0 242 42" className="mt-[37px] overflow-visible">
          <path d="M0 5Q5 1 17.500 1T35 5V17Q35 32 17.500 39 0 32 0 17Z" fill="#6091ba" />
          <path d="M6 10 17.500 16.500 29 10 17.500 27Z" fill="#fff" />
          <text x="44" y="20" fontFamily="Liberation Sans" fontWeight="700" fontSize="24.5" fill="#4d4d4d" textLength="197" lengthAdjust="spacingAndGlyphs">College Green Online</text>
          <text x="46.500" y="37" fontFamily="Open Sans" fontWeight="300" fontSize="13" fill="#444" textLength="187" lengthAdjust="spacingAndGlyphs">Website Template for Education</text>
        </svg>
        <div className="flex flex-col items-end pt-[30px] font-['Open_Sans']">
          <div className="flex text-[11px] leading-4 tracking-[0.06px] text-[#777]">
            <a className="pr-[10px]">Home</a>
            <a className="border-l border-[#ccc] px-[10px]">FAQ</a>
            <a className="border-l border-[#ccc] pl-[10px]">Contact</a>
          </div>
          <div className="mt-[14px] flex text-[13px] font-light leading-5 text-[#444]">
            <div className="mt-[3px] flex">
              <Icon name="phone" size={22} className="-mt-[3px] mr-[6px] text-[#6091ba]" />
              <span className="tracking-[-0.22px]">Call us today 0800 123 4567</span>
            </div>
            <div className="ml-[30px] flex">
              <Icon name="envelope" size={18} className="mr-2 text-[#6091ba]" />
              <span>enquires@website.com</span>
            </div>
          </div>
        </div>
      </header>

      <div className="absolute right-0 top-[100px] flex h-9 w-9 items-center justify-center rounded-l bg-[#444] pt-[2px] text-white">
        <Icon name="cog" size={22} />
      </div>

      <nav className="h-[50px] bg-[#6091ba]">
        <div className="mx-auto flex h-full w-[1110px] font-['Open_Sans'] text-[13px] font-semibold leading-[50px] tracking-[-0.14px] text-[#dfe9f1]">
          {NAV.map(([t, more]) => (
            <a key={t} className="flex items-center px-[15px] first:tracking-normal">{t}{more && <Caret />}</a>
          ))}
          <a className="relative flex items-center overflow-hidden bg-[#4578a2] px-[15px] text-white">
            CONTACT
            <span className="absolute -bottom-[3px] left-1/2 size-[6px] -translate-x-1/2 rotate-45 bg-white" />
          </a>
        </div>
      </nav>

      <main className="mx-auto w-[1110px]">
        <div className="flex h-[79px] justify-between border-b border-[#e6e6e6]">
          <h1 className="mt-[29px] font-['Open_Sans'] text-[28px] font-light leading-[36px] tracking-[-0.1px] text-[#212529]">Contact</h1>
          <div className="mt-[55px] flex text-[12px] leading-[18px] tracking-[0.08px] text-[#aaa]">
            <span>You are here:</span>
            <span className="ml-[5px]">Home</span>
            <svg width="5" height="8" viewBox="0 0 5 8" className="mx-[5px] mt-[5px]" fill="none" stroke="#999" strokeWidth="1.2"><path d="M1 1 4 4 1 7" /></svg>
            <span className="text-[#6091ba]">Contact</span>
          </div>
        </div>

        <div className="flex h-[625px] justify-between pt-[30px]">
          <div className="w-[730px]">
            <h3 className={H3}>Get in touch</h3>
            <p className="mt-[14.9px] mb-4 whitespace-nowrap">
              <span className="tracking-[0.066px]">We’d love to hear from you. Lorem ipsum dolor sit amet, consectetur adipiscing elit. Nullam ut erat magna. Aliquam porta sem</span><br />
              <span className="tracking-[0.015px]">a lacus imperdiet posuere. Integer semper eget ligula id eleifend.</span>
            </p>
            <Field label="Name"><input className={INPUT + " h-[35px]"} placeholder="Enter your name" /></Field>
            <Field label="Email" required><input className={INPUT + " h-[35px]"} placeholder="Enter your email" /></Field>
            <Field label="Phone"><input className={INPUT + " h-[35px]"} placeholder="Enter your contact number" /></Field>
            <Field label="Message" required>
              <div className="relative">
                <textarea className={INPUT + " h-[154px] resize-none py-[7px] leading-[21px]"} placeholder="Enter your message here..." />
                <svg width="10" height="10" viewBox="0 0 10 10" className="absolute bottom-[2px] right-[2px]" fill="#a8a8a8">
                  {[[9, 0], [6, 3], [9, 3], [3, 6], [6, 6], [9, 6], [0, 9], [3, 9], [6, 9], [9, 9]].map(([x, y]) => <rect key={x + "-" + y} x={x} y={y} width="1" height="1" />)}
                </svg>
              </div>
            </Field>
            <button className="-mt-px h-[38px] w-[133px] bg-[#6091ba] pt-[2px] text-[16px] text-white">Send message</button>
          </div>

          <aside className="w-[255px]">
            <h3 className={H3}>Download Prospectus</h3>
            <p className="mt-[14.9px] whitespace-nowrap tracking-[0.03px]">Donec pulvinar arcu lacus, vel aliquam<br />libero scelerisque a. Cras mi tellus,<br />vulputate eu eleifend at, consectetur<br />fringilla lacus. Nulla ut purus.</p>
            <button className="mt-[15.1px] flex h-[38px] w-[153px] items-center gap-[4px] whitespace-nowrap bg-[#6091ba] pl-[13px] pt-[2px] text-[16px] text-white">
              <Icon name="download" size={16} className="mb-[3px]" />Download now
            </button>
            <div className="mt-[15px] border-t border-dotted border-[#ddd]" />
            <h3 className={H3 + " mt-[30px]"}>Postal Address</h3>
            <div className="mt-[14.9px]"><Address /></div>
            <div className="mt-[30.1px] border-t border-dotted border-[#ddd]" />
            <h3 className={H3 + " mt-[30px]"}>All Enquiries</h3>
            <div className="mt-[14.9px] flex">
              <Icon name="phone" size={16} className="-ml-[2px] mr-[4px] text-[#6091ba]" />Tel: 0800 123 4567
            </div>
            <div className="mt-[15.5px] flex">
              <Icon name="envelope" size={13} className="mr-[5px] mt-[3px] text-[#6091ba]" /><span className="tracking-[0.1px]">Email:&nbsp;</span><a className="text-[#6091ba]">enquires@website.com</a>
            </div>
          </aside>
        </div>

        <h3 className={H3 + " mb-[14px]"}>How to find us</h3>
        <MapBox />
      </main>

      <footer className="mt-[30px] h-[303px] bg-[#444] text-[#d9d9d9]">
        <div className="mx-auto flex w-[1110px] pl-[15px] pt-[29px]">
          <div className="w-[285px]">
            <h3 className={FOOT_H3}>About</h3>
            <ul className="mt-[18px] text-[12px] leading-[18px] tracking-[0.11px]">
              {["About us", "Contact us", "Privacy policy", "Terms & Conditions"].map((t) => (
                <li key={t} className="mb-[10px] flex items-center">
                  <svg width="4" height="8" viewBox="0 0 4 8" className="mr-[10px]" fill="#808080"><path d="M0 0 4 4 0 8Z" /></svg>{t}
                </li>
              ))}
            </ul>
          </div>
          <div className="w-[570px]">
            <h3 className={FOOT_H3}>Join our mailing list</h3>
            <p className="mt-[17.500px] tracking-[0.045px]">Subscribe to get our weekly newsletter delivered directly to your inbox</p>
            <div className="mt-[17px] flex items-center gap-[3px]">
              <input className="h-[31px] w-[320px] bg-[#f5f5f5] px-3 text-[13px] placeholder-[#a6a6a6] outline-none" placeholder="Enter your email" />
              <button className="h-[33px] w-[84px] bg-[#6091ba] text-[13px] text-white">Subscribe</button>
            </div>
          </div>
          <div>
            <h3 className={FOOT_H3 + " tracking-normal"}>Contact us</h3>
            <div className="mt-[18px] flex">
              <Icon name="marker" size={16} className="-ml-[3px] mr-[6px] mt-[1px] text-[#777]" />
              <Address />
            </div>
            <div className="mt-[29.500px] flex">
              <Icon name="phone" size={16} className="-ml-[2px] mr-[9px] text-[#777]" />0800 123 4567
            </div>
            <div className="mt-[16.500px] flex">
              <Icon name="envelope" size={13} className="mr-[10px] mt-[3px] text-[#777]" />enquires@website.com
            </div>
          </div>
        </div>
      </footer>

      <div className="h-[46px] bg-[#2b2b2b]">
        <div className="mx-auto flex w-[1110px] justify-between">
          <span className="mt-[13px] text-[11px] leading-4 tracking-[-0.04px] text-[#d0d0d0]">Template Copyright @ <a className="text-[#6091ba]">3rd Wave Media</a></span>
          <div className="mt-[13px] flex h-5 items-center text-[#aaa]">
            <span className="flex w-[35px] justify-center"><Icon name="rss" size={18} /></span>
            <span className="flex w-[35px] justify-center"><FaSkype size={17} /></span>
            <span className="flex w-[35px] justify-center"><FaPinterest size={16} /></span>
            <span className="flex w-[41px] justify-center"><Icon name="gplus" size={18} /></span>
            <span className="flex w-[39px] justify-center"><Icon name="linkedin" size={18} /></span>
            <span className="flex w-[30px] justify-center"><YouTubeIcon knock="#2b2b2b" /></span>
            <span className="flex w-[36px] justify-center"><Icon name="facebook" size={18} /></span>
            <span className="flex w-[29px] justify-center"><Icon name="twitter" size={18} /></span>
          </div>
        </div>
      </div>
    </div>
  );
}
